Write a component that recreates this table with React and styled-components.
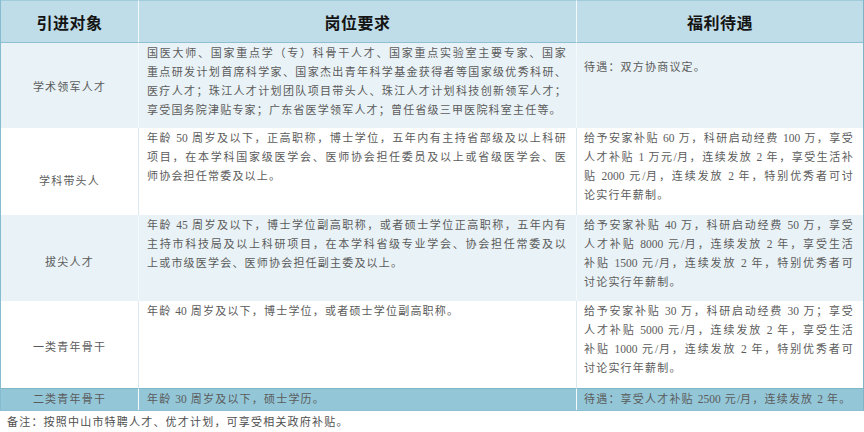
import React from "react";
import styled, { createGlobalStyle, css } from "styled-components";

const Global = createGlobalStyle`
  html, body { margin: 0; padding: 0; background: #ffffff; }
  body { width: 864px; height: 432px; overflow: hidden; }
`;

const Page = styled.div`
  width: 864px;
  font-family: "Liberation Serif", "Noto Sans CJK SC", serif;
  color: #5b5b5b;
  font-size: 11px;
  letter-spacing: 1.2px;
`;

const Table = styled.div`
  display: grid;
  grid-template-columns: 137px 438px 287px;
  grid-template-rows: 43px 85px 87px 86px 87px 22px;
  width: 862px;
  border-left: 1px solid #86bccf;
  border-right: 1px solid #7fb3c6;
  border-bottom: 1px solid #8cbfd1;
`;

const tones = {
  head: css`
    background: #bfdde8;
    border-bottom: 1px solid #8fc0d1;
    border-top: 1px solid #9fcbda;
  `,
  light: css`background: #e9f2f6;`,
  white: css`background: #ffffff;`,
  accent: css`
    background: #93c6d7;
    border-top: 1px solid #7fb7ca;
  `,
};

const Cell = styled.div`
  box-sizing: border-box;
  ${(p) => tones[p.$tone]}
  ${(p) => p.$divider && css`border-left: 1px solid ${p.$tone === "white" ? "#dbe9ef" : "#f4f9fb"};`}
`;

const HeadCell = styled(Cell)`
  display: flex;
  align-items: center;
  justify-content: center;
  font-family: "Noto Sans CJK SC", sans-serif;
  font-weight: 700;
  font-size: 16px;
  letter-spacing: 0.5px;
  color: #141414;
`;

const NameCell = styled(Cell)`
  display: flex;
  align-items: center;
  justify-content: center;
  padding-top: ${(p) => p.$shift || 0}px;
  line-height: 19px;
`;

const TextCell = styled(Cell)`
  padding: ${(p) => p.$top ?? 1}px 9px 0 ${(p) => p.$left || 8}px;
  line-height: 19px;
`;

const Line = styled.div`
  white-space: nowrap;
  text-align: left;
  ${(p) =>
    p.$fill &&
    css`
      text-align: justify;
      text-align-last: justify;
    `}
`;

const Num = styled.span`
  letter-spacing: 0;
  font-size: 11.5px;
`;

const Note = styled.div`
  padding: 2px 0 0 7px;
  line-height: 19px;
  color: #4e4e4e;
`;

const withNums = (text) =>
  text.split(/([0-9/]+)/).map((part, i) =>
    /^[0-9/]+$/.test(part) ? <Num key={i}>{part}</Num> : part
  );

const Lines = ({ lines }) =>
  lines.map((l, i) => (
    <Line key={i} $fill={i < lines.length - 1}>
      {withNums(l)}
    </Line>
  ));

const rows = [
  {
    name: "学术领军人才",
    tone: "light",
    shift: 3,
    req: [
      "国医大师、国家重点学（专）科骨干人才、国家重点实验室主要专家、国家",
      "重点研发计划首席科学家、国家杰出青年科学基金获得者等国家级优秀科研、",
      "医疗人才；珠江人才计划团队项目带头人、珠江人才计划科技创新领军人才；",
      "享受国务院津贴专家；广东省医学领军人才；曾任省级三甲医院科室主任等。",
    ],
    ben: ["待遇：双方协商议定。"],
    benTop: 15,
  },
  {
    name: "学科带头人",
    tone: "white",
    shift: 20,
    req: [
      "年龄 50 周岁及以下，正高职称，博士学位，五年内有主持省部级及以上科研",
      "项目，在本学科国家级医学会、医师协会担任委员及以上或省级医学会、医",
      "师协会担任常委及以上。",
    ],
    ben: [
      "给予安家补贴 60 万，科研启动经费 100 万，享受",
      "人才补贴 1 万元/月，连续发放 2 年，享受生活补",
      "贴 2000 元/月，连续发放 2 年，特别优秀者可讨",
      "论实行年薪制。",
    ],
  },
  {
    name: "拔尖人才",
    tone: "light",
    shift: 8,
    req: [
      "年龄 45 周岁及以下，博士学位副高职称，或者硕士学位正高职称，五年内有",
      "主持市科技局及以上科研项目，在本学科省级专业学会、协会担任常委及以",
      "上或市级医学会、医师协会担任副主委及以上。",
    ],
    ben: [
      "给予安家补贴 40 万，科研启动经费 50 万，享受",
      "人才补贴 8000 元/月，连续发放 2 年，享受生活",
      "补贴 1500 元/月，连续发放 2 年，特别优秀者可",
      "讨论实行年薪制。",
    ],
  },
  {
    name: "一类青年骨干",
    tone: "white",
    shift: 6,
    req: ["年龄 40 周岁及以下，博士学位，或者硕士学位副高职称。"],
    ben: [
      "给予安家补贴 30 万，科研启动经费 30 万；享受",
      "人才补贴 5000 元/月，连续发放 2 年，享受生活",
      "补贴 1000 元/月，连续发放 2 年，特别优秀者可",
      "讨论实行年薪制。",
    ],
  },
  {
    name: "二类青年骨干",
    tone: "accent",
    shift: 0,
    req: ["年龄 30 周岁及以下，硕士学历。"],
    ben: ["待遇：享受人才补贴 2500 元/月，连续发放 2 年。"],
    top: 1,
    benTop: 1,
  },
];

export default function App() {
  return (
    <Page>
      <Global />
      <Table>
        <HeadCell $tone="head">引进对象</HeadCell>
        <HeadCell $tone="head" $divider>
          岗位要求
        </HeadCell>
        <HeadCell $tone="head" $divider>
          福利待遇
        </HeadCell>
        {rows.map((r) => (
          <React.Fragment key={r.name}>
            <NameCell $tone={r.tone} $shift={r.shift}>
              {r.name}
            </NameCell>
            <TextCell $tone={r.tone} $divider $top={r.top}>
              <Lines lines={r.req} />
            </TextCell>
            <TextCell $tone={r.tone} $divider $top={r.benTop} $left={7}>
              <Lines lines={r.ben} />
            </TextCell>
          </React.Fragment>
        ))}
      </Table>
      <Note>备注：按照中山市特聘人才、优才计划，可享受相关政府补贴。</Note>
    </Page>
  );
}
